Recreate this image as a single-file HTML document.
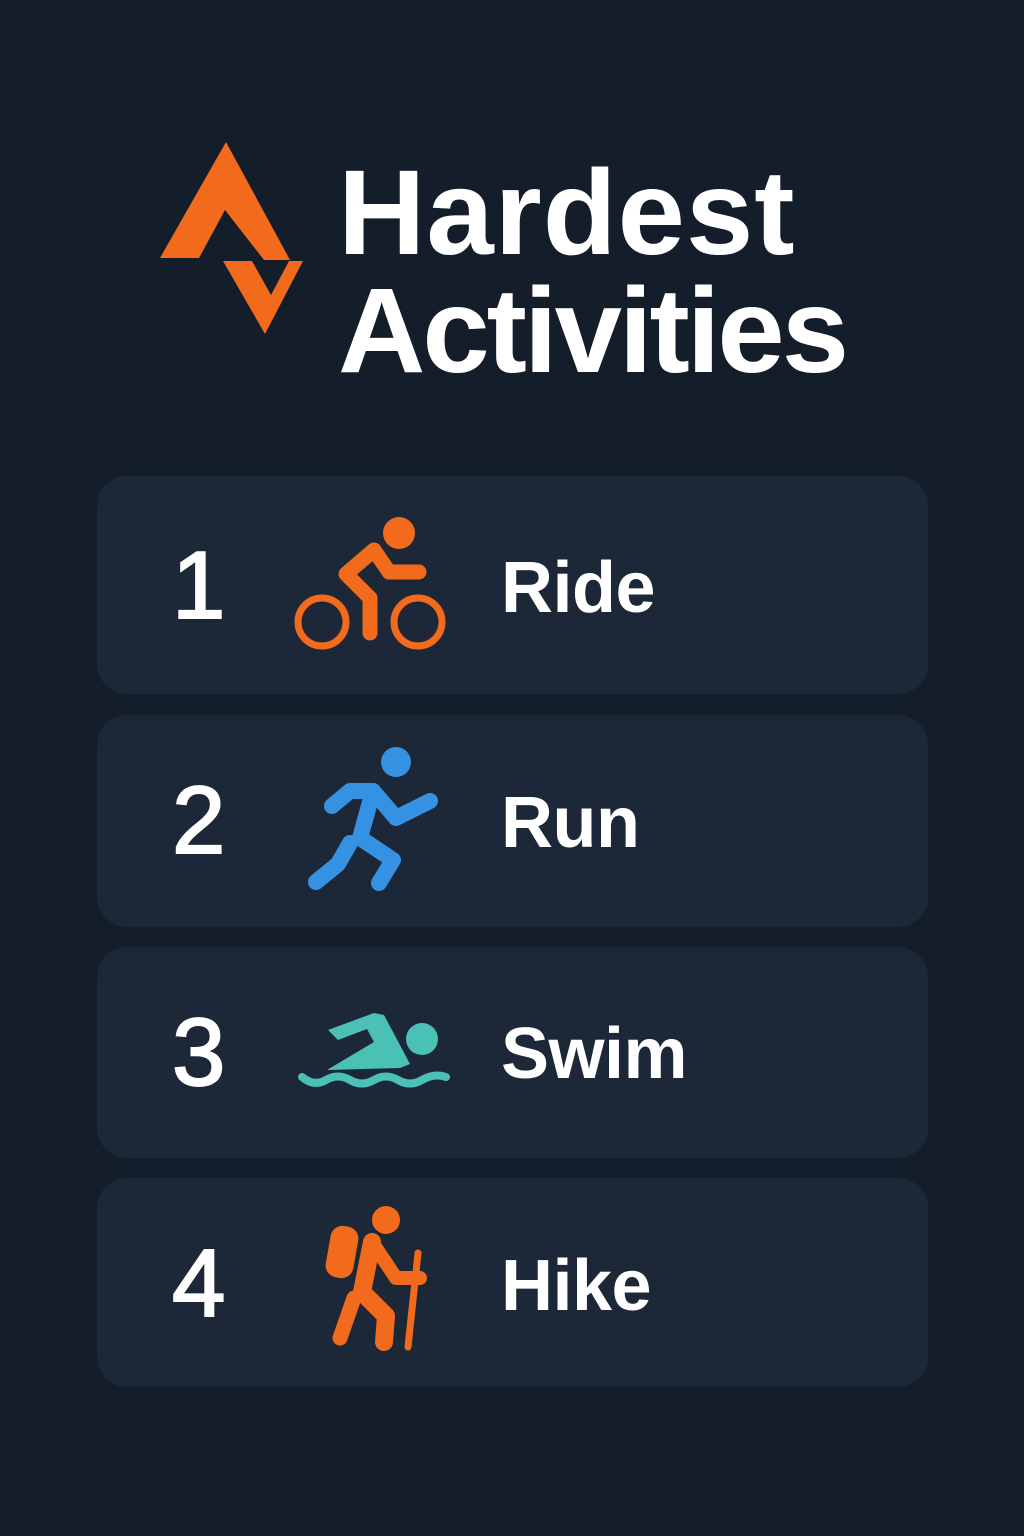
<!DOCTYPE html>
<html><head><meta charset="utf-8"><style>
html,body{margin:0;padding:0}
body{width:1024px;height:1536px;background:#141e2b;position:relative;overflow:hidden;font-family:"Liberation Sans",sans-serif;color:#fff}
.t{position:absolute;left:338px;font-weight:bold;font-size:121px;line-height:1}
.card{position:absolute;left:97px;width:831px;background:#1c2837;border-radius:30px}
.n{position:absolute;left:172px;font-size:96px;line-height:1;-webkit-text-stroke:2px #fff}
.l{position:absolute;left:501px;font-weight:bold;font-size:72px;letter-spacing:-0.5px;line-height:1}
svg{position:absolute;left:0;top:0}
</style></head><body>
<div class="t" style="top:152px;letter-spacing:1px">Hardest</div>
<div class="t" style="top:270px;letter-spacing:-3px">Activities</div>
<div class="card" style="top:476px;height:218px"></div>
<div class="card" style="top:715px;height:212px"></div>
<div class="card" style="top:947px;height:211px"></div>
<div class="card" style="top:1178px;height:209px"></div>
<div class="n" style="top:538px">1</div>
<div class="n" style="top:773px">2</div>
<div class="n" style="top:1005px">3</div>
<div class="n" style="top:1236px">4</div>
<div class="l" style="top:552px">Ride</div>
<div class="l" style="top:787px">Run</div>
<div class="l" style="top:1018px">Swim</div>
<div class="l" style="top:1250px">Hike</div>
<svg width="1024" height="1536" viewBox="0 0 1024 1536">
<g fill="#f26a1b">
<polygon points="226,142 290,260 264,260 225,210 199,258 160,258"/>
<polygon points="223,261 252,261 271,295 289,261 303,261 265,334"/>
</g>
<g fill="none" stroke="#f26a1b" stroke-linecap="round" stroke-linejoin="round">
<circle cx="322" cy="622" r="24" stroke-width="7"/>
<circle cx="418" cy="622" r="24" stroke-width="7"/>
<polyline points="370,633 370,598 346,574 374,550 389,572 419,572" stroke-width="15"/>
</g>
<circle cx="399" cy="533" r="16" fill="#f26a1b"/>
<g fill="none" stroke="#3592e3" stroke-linecap="round" stroke-linejoin="round" stroke-width="16">
<polyline points="332,806 350,791 373,791 396,818 430,801"/>
<polyline points="373,791 360,838 393,860 379,883"/>
<polyline points="350,843 338,864 316,882"/>
</g>
<circle cx="396" cy="762" r="15" fill="#3592e3"/>
<g fill="#4bc0b5">
<circle cx="422" cy="1039" r="16"/>
<polygon points="328,1030 374,1013 384,1015 410,1064 400,1068 327,1070 374,1042 367,1029 338,1040"/>
</g>
<path d="M302,1077 q12,10 24,3 t24,0 t24,0 t24,0 t24,0 t24,-3" fill="none" stroke="#4bc0b5" stroke-width="8" stroke-linecap="round"/>
<g fill="none" stroke="#f26a1b" stroke-linecap="round" stroke-linejoin="round">
<rect x="328" y="1226" width="28" height="52" rx="12" fill="#f26a1b" stroke="none" transform="rotate(10 342 1252)"/>
<polyline points="372,1242 362,1292 386,1316 384,1342" stroke-width="18"/>
<polyline points="372,1242 396,1278 420,1278" stroke-width="14"/>
<polyline points="354,1298 340,1338" stroke-width="15"/>
<line x1="418" y1="1253" x2="408" y2="1347" stroke-width="7"/>
</g>
<circle cx="386" cy="1220" r="14" fill="#f26a1b"/>
</svg>
</body></html>
